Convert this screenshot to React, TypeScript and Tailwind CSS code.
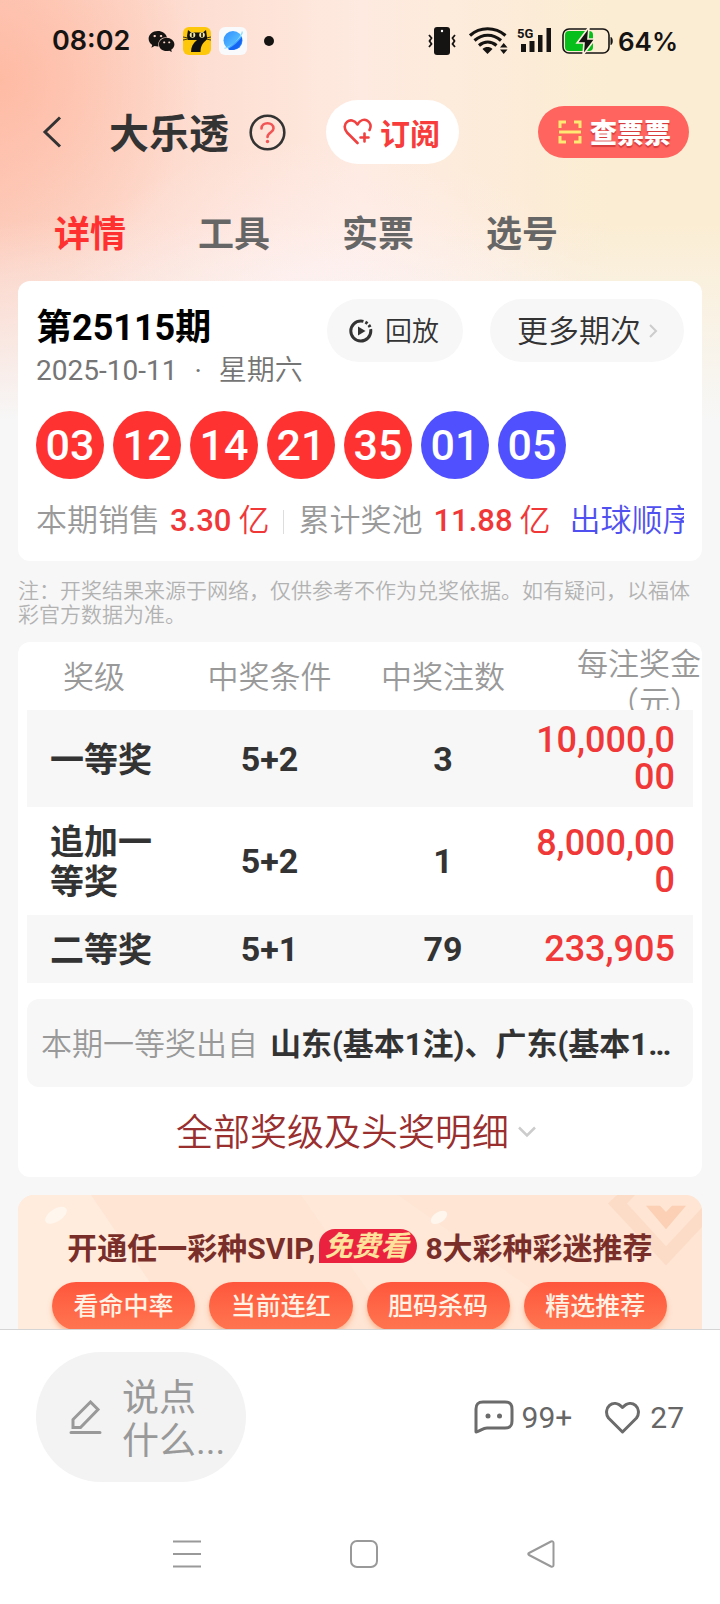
import { useState } from 'react';
import { FaWeixin } from 'react-icons/fa';

const TABS = ['详情', '工具', '实票', '选号'];

const BALLS = [
    { num: '03', color: 'bg-[#ff3232]' },
    { num: '12', color: 'bg-[#ff3232]' },
    { num: '14', color: 'bg-[#ff3232]' },
    { num: '21', color: 'bg-[#ff3232]' },
    { num: '35', color: 'bg-[#ff3232]' },
    { num: '01', color: 'bg-[#5050ff]' },
    { num: '05', color: 'bg-[#5050ff]' },
];

const PRIZES = [
    { level: '一等奖', rule: '5+2', count: '3', amount: '10,000,000' },
    { level: '追加一等奖', rule: '5+2', count: '1', amount: '8,000,000' },
    { level: '二等奖', rule: '5+1', count: '79', amount: '233,905' },
];

const PERKS = ['看命中率', '当前连红', '胆码杀码', '精选推荐'];

function CatIcon() {
    return (
        <svg width="28" height="28" viewBox="0 0 28 28">
            <rect width="28" height="28" rx="6" fill="#fdc70c" />
            <path d="M5 3l3 2.500h12L23 3l1 7c1 3-3 4-5 8-1 2-1.500 4-1.500 7H8c0-5 2-9 6-12H5L4 9z" fill="#111" />
            <circle cx="9.500" cy="8" r="2.800" fill="#f7e9a0" />
            <circle cx="19" cy="8" r="2.800" fill="#f7e9a0" />
            <path d="M9.500 6v4M19 6v4" stroke="#111" strokeWidth="1.6" />
            <path d="M0 10l5 1M0 13l5-1M28 10l-5 1M28 13l-5-1" stroke="#111" strokeWidth="0.8" />
        </svg>
    );
}

function PlanetIcon() {
    return (
        <svg width="28" height="28" viewBox="0 0 28 28">
            <defs>
                <linearGradient id="planet" x1="0" y1="0" x2="1" y2="1">
                    <stop offset="0" stopColor="#2f8bff" />
                    <stop offset="0.55" stopColor="#4fb6ff" />
                    <stop offset="1" stopColor="#0a5cf0" />
                </linearGradient>
            </defs>
            <rect width="28" height="28" rx="6" fill="#f8fafc" />
            <circle cx="14" cy="13.5" r="9.5" fill="url(#planet)" />
            <path d="M23 4c3 2-3 8-8 12-5 4-9 7-10 5 4-1 8-3 11-6s6-7 7-11z" fill="#8bdcff" />
            <path d="M9 22c6-3 10-7 14-12 1 6-4 13-10 13-2 0-3 0-4-1z" fill="#1565f5" />
        </svg>
    );
}

function VibrateIcon() {
    return (
        <svg width="28" height="28" viewBox="0 0 28 28">
            <rect x="6" y="0" width="16" height="28" rx="3" fill="#161413" />
            <circle cx="14" cy="4" r="1.2" fill="#fff" />
            <path
                d="M1 8l2.500 3-2 3 2 3L1 20M27 8l-2.500 3 2 3-2 3L27 20"
                fill="none"
                stroke="#161413"
                strokeWidth="1.800"
            />
        </svg>
    );
}

function WifiIcon() {
    return (
        <svg width="39" height="28" viewBox="0 0 39 28">
            <g fill="none" stroke="#161413" strokeWidth="3.200">
                <path d="M1 8.500C11-.5 26-.5 36.500 8.500" />
                <path d="M5.500 13.500c8-7 18.500-7 26.500 0" />
                <path d="M10 18.500c5.500-4.500 12-4.500 17.500 0" />
            </g>
            <path d="M13.500 22c3-2.600 7-2.600 10 0l-5 5z" fill="#161413" />
            <path d="M31 20.500h7.500L34.700 16zM31 22.500h7.500L34.700 27z" fill="#161413" />
        </svg>
    );
}

function SignalIcon() {
    return (
        <svg width="36" height="28" viewBox="0 0 36 28">
            <text x="0" y="11" fontSize="13" fontWeight="700" fontFamily="Roboto, sans-serif" fill="#161413">5G</text>
            <path d="M4 17h5v8H4zM12.500 14h5v11h-5zM21 8h4.500v17H21zM29.500 1H34v24h-4.500z" fill="#161413" />
        </svg>
    );
}

function BatteryIcon() {
    return (
        <svg width="52" height="28" viewBox="0 0 52 28">
            <rect x="1" y="2" width="46" height="24" rx="6" fill="none" stroke="#161413" strokeWidth="1.600" />
            <rect x="3" y="4" width="28" height="20" rx="4" fill="#06bf1b" />
            <path d="M48.500 10c3 0 3 8 0 8z" fill="#161413" />
            <path d="M27 0L15 16h7l-1 12 12-16h-7z" fill="#161413" stroke="#fdf1dc" strokeWidth="1.600" />
        </svg>
    );
}

function StatusBar() {
    return (
        <div className="flex h-[82px] items-center justify-between pr-[42px] pl-[52px] font-['Inter',sans-serif] font-semibold text-[#161413]">
            <div className="flex items-center">
                <span className="text-[27px]">08:02</span>
                <FaWeixin className="ml-[18px]" size={27} />
                <div className="ml-2 flex items-center gap-2">
                    <CatIcon />
                    <PlanetIcon />
                </div>
                <span className="ml-[17px] size-[10px] rounded-full bg-[#161413]" />
            </div>
            <div className="flex items-center">
                <VibrateIcon />
                <div className="ml-[13px] flex items-center gap-[9px]">
                    <WifiIcon />
                    <SignalIcon />
                    <BatteryIcon />
                </div>
                <span className="ml-1 text-[26px]">64%</span>
            </div>
        </div>
    );
}

function TitleBar() {
    return (
        <header className="flex h-[100px] items-center pr-[31px] pl-[42px]">
            <button aria-label="返回">
                <svg width="20" height="32" viewBox="0 0 20 32" fill="none" stroke="#333" strokeWidth="3">
                    <path d="M18 1.500L3 16l15 14.500" />
                </svg>
            </button>
            <h1 className="ml-[47px] pt-[6px] text-[40px] leading-none font-bold text-[#333]">大乐透</h1>
            <button className="ml-5" aria-label="帮助">
                <svg width="37" height="37" viewBox="0 0 37 37" fill="none" strokeWidth="2.600">
                    <circle cx="18.500" cy="18.500" r="16.800" stroke="#333" />
                    <path d="M12.500 14.500c0-7 12-7 12 0 0 4-6 4-6 8.500" stroke="#f25555" strokeLinecap="round" />
                    <circle cx="18.500" cy="27.500" r="1.700" fill="#f25555" />
                </svg>
            </button>
            <button className="ml-10 flex h-16 items-center gap-2 rounded-full bg-white pr-[19px] pl-[17px] text-[30px] font-bold text-[#f83b3b]">
                <svg width="29" height="28" viewBox="0 0 29 28" fill="none" stroke="#f04040" strokeWidth="2.600" strokeLinecap="round" strokeLinejoin="round">
                    <path d="M14.500 25L4 14.500C-3 6 8-3 14.500 6.500 20-3 31 4 26.500 12" />
                    <path d="M21.500 15.500v8M17.500 19.500h8" />
                </svg>
                <span className="pt-1">订阅</span>
            </button>
            <button className="ml-auto flex h-[52px] items-center gap-2 rounded-full bg-[#ff645f] pr-[18px] pl-5 text-[27px] font-black text-white [text-shadow:0_2px_1px_#d63c3c]">
                <svg width="24" height="24" viewBox="0 0 24 24" fill="none" stroke="#ffe873" strokeWidth="3">
                    <path d="M2 8V2h6M16 2h6v6M22 16v6h-6M8 22H2v-6M1 12h22" />
                </svg>
                <span className="pt-1">查票票</span>
            </button>
        </header>
    );
}

function DrawCard() {
    return (
        <section className="rounded-xl bg-white px-[18px] pt-[18px]">
            <div className="flex items-start">
                <div>
                    <h2 className="pt-[3px] text-[36px] leading-[52px] font-bold text-black">第25115期</h2>
                    <p className="flex gap-[17px] text-[28px] leading-[34px] text-[#757575]">
                        <span>2025-10-11</span>
                        <span>·</span>
                        <span className="font-[350]">星期六</span>
                    </p>
                </div>
                <div className="ml-auto flex gap-[27px] text-[#333]">
                    <button className="flex h-[63px] items-center gap-3 rounded-full bg-[#f7f7f7] pr-6 pl-[22px] text-[27px]">
                        <svg width="24" height="24" viewBox="0 0 24 24" fill="none" stroke="#333" strokeWidth="3">
                            <path d="M12 2a10 10 0 1 0 9.800 10" />
                            <path d="M12 2a10 10 0 0 1 9.800 10" strokeDasharray="2.500 2" />
                            <path d="M9 7.500l7.500 4.500L9 16.500z" fill="#333" stroke="none" />
                        </svg>
                        <span className="pt-1 font-[350]">回放</span>
                    </button>
                    <button className="flex h-[63px] items-center gap-2 rounded-full bg-[#f7f7f7] pr-[26px] pl-[27px] text-[31px]">
                        <span className="pt-1 font-[350]">更多期次</span>
                        <svg width="9" height="14" viewBox="0 0 9 14" fill="none" stroke="#ccc" strokeWidth="2">
                            <path d="M1 1l6 6-6 6" />
                        </svg>
                    </button>
                </div>
            </div>
            <ul className="mt-[23px] flex gap-[9px]">
                {BALLS.map(ball => (
                    <li
                        key={ball.num}
                        className={`flex size-[68px] items-center justify-center rounded-full text-[43px] font-medium text-white ${ball.color}`}
                    >
                        {ball.num}
                    </li>
                ))}
            </ul>
            <div className="flex h-[82px] items-center overflow-hidden pt-[3px] text-[31px] font-[350] whitespace-nowrap text-[#999]">
                本期销售
                <span className="ml-[10px] font-medium text-[#f03838]">3.30</span>
                <span className="ml-[7px] text-[#f03838]">亿</span>
                <span className="mx-[14px] h-6 w-px shrink-0 bg-[#ddd]" />
                累计奖池
                <span className="ml-[11px] font-medium text-[#f03838]">11.88</span>
                <span className="ml-[7px] text-[#f03838]">亿</span>
                <a href="#order" className="ml-[19px] text-[#5050f0]">出球顺序</a>
            </div>
        </section>
    );
}

function PrizeTable() {
    return (
        <table className="w-full table-fixed">
            <colgroup>
                <col className="w-[156px]" />
                <col className="w-[173px]" />
                <col className="w-[174px]" />
                <col />
            </colgroup>
            <thead className="text-[31px] leading-[38px] text-[#999]">
                <tr className="h-[68px]">
                    <th className="pt-1 pl-9 text-left font-[350]">奖级</th>
                    <th className="pt-1 font-[350]">中奖条件</th>
                    <th className="pt-1 font-[350]">中奖注数</th>
                    <th className="p-0 text-right font-[350]">
                        <div className="-mr-2 ml-8 h-[68px] overflow-hidden pt-1">每注奖金（元）</div>
                    </th>
                </tr>
            </thead>
            <tbody className="text-[34px] leading-10 font-bold text-[#333]">
                {PRIZES.map(prize => (
                    <tr key={prize.level} className="odd:bg-[#f7f7f7]">
                        <td className="px-[23px] pt-[15px] pb-[13px]">{prize.level}</td>
                        <td className="text-center">{prize.rule}</td>
                        <td className="text-center">{prize.count}</td>
                        <td className="pt-3 pb-[11px] pr-[18px] text-right text-[36px] leading-[37px] font-medium break-all text-[#f03838]">
                            {prize.amount}
                        </td>
                    </tr>
                ))}
            </tbody>
        </table>
    );
}

function SvipBanner() {
    return (
        <section className="relative overflow-hidden rounded-t-2xl bg-[#fee5d4] px-[34px] pt-[31px]">
            <svg className="absolute inset-0 size-full" viewBox="0 0 684 134" preserveAspectRatio="none">
                <path d="M0 0h73l72 100v34H0z" fill="#ffecdd" />
                <path d="M283 0l100 134h200L380 0z" fill="#ffe8d8" />
                <ellipse cx="38" cy="19" rx="12" ry="6" transform="rotate(-30 38 19)" fill="#fff6ee" />
                <ellipse cx="421" cy="21" rx="9" ry="5" transform="rotate(-30 421 21)" fill="#fff6ee" />
                <path d="M590 8l58 58 36-36V12l-36 36L609 8l8-8h-18z" fill="#fddcc7" />
                <path d="M628 10h14l6 6 6-6h14l-20 22z" fill="#fbd0b4" />
            </svg>
            <h3 className="relative flex h-10 items-center justify-center text-[30px] font-bold whitespace-nowrap text-[#7a2e2a]">
                <span className="pt-1">开通任一彩种SVIP,</span>
                <em className="mr-2 ml-1 rounded-tl-2xl rounded-r-[17px] bg-[#ea2240] pt-[2px] pr-[9px] pl-[5px] text-[28px] leading-8 text-[#ffe39c]">免费看</em>
                <span className="pt-1">8大彩种彩迷推荐</span>
            </h3>
            <div className="relative mt-4 grid h-[56px] grid-cols-4 items-start gap-[14px] pr-px">
                {PERKS.map(perk => (
                    <button
                        key={perk}
                        className="h-12 rounded-full bg-linear-to-b from-[#fe563c] to-[#ff7550] pt-[2px] text-[25px] font-medium whitespace-nowrap text-[#fff3e6] shadow-md shadow-[#fbb48f]"
                    >
                        {perk}
                    </button>
                ))}
            </div>
        </section>
    );
}

function CommentBar() {
    return (
        <div className="flex items-center px-9 pt-[22px] text-[30px] text-[#666]">
            <label className="flex h-[130px] w-[210px] items-center gap-5 rounded-full bg-[#f3f3f3] pl-[33px]">
                <svg className="shrink-0" width="33" height="34" viewBox="0 0 33 34" fill="none" stroke="#999" strokeWidth="3" strokeLinecap="round">
                    <path d="M4 27.500v-8L21.500 2l7.500 7.500L11.500 27.500zM2 32.500h29" />
                </svg>
                <textarea
                    rows={2}
                    aria-label="评论"
                    placeholder="说点什么..."
                    className="box-content w-[106px] resize-none overflow-hidden bg-transparent pt-[6px] text-[37px] leading-[43px] font-normal outline-none placeholder:text-[#999]"
                />
            </label>
            <button className="ml-auto flex items-center gap-2">
                <svg width="40" height="34" viewBox="0 0 40 34" fill="none" stroke="#6b6b6b" strokeWidth="3" strokeLinejoin="round">
                    <path d="M2 32V9c0-5 2-7 7-7h22c5 0 7 2 7 7v12c0 5-2 7-7 7H13c-4 0-7 3-11 4z" />
                    <circle cx="14" cy="16" r="2.500" fill="#6b6b6b" stroke="none" />
                    <circle cx="25.500" cy="16" r="2.500" fill="#6b6b6b" stroke="none" />
                </svg>
                99+
            </button>
            <button className="ml-8 flex items-center gap-[9px]">
                <svg width="37" height="34" viewBox="0 0 37 34" fill="none" stroke="#6b6b6b" strokeWidth="3" strokeLinejoin="round">
                    <path d="M18.500 32L4.500 18C-2 9 9-3 18.500 7.500 28-3 39 9 32.500 18z" />
                </svg>
                27
            </button>
        </div>
    );
}

function SystemNav() {
    return (
        <nav className="grid h-[122px] grid-cols-3 items-center justify-items-center pt-[22px] pr-[90px] pl-[98px]">
            <button aria-label="最近任务">
                <svg width="28" height="28" viewBox="0 0 28 28" stroke="#999" strokeWidth="2.200">
                    <path d="M0 1.500h28M0 14h28M0 26.500h28" />
                </svg>
            </button>
            <button aria-label="主页">
                <svg width="28" height="28" viewBox="0 0 28 28" fill="none" stroke="#999" strokeWidth="2">
                    <rect x="1" y="1" width="26" height="26" rx="6" />
                </svg>
            </button>
            <button aria-label="后退">
                <svg width="28" height="28" viewBox="0 0 28 28" fill="none" stroke="#999" strokeWidth="2" strokeLinejoin="round">
                    <path d="M2 13L24 1.500c1.500-.5 2.500 0 2.500 1.500v22c0 1.500-1 2-2.500 1.500L2 15c-1-.5-1-1.500 0-2z" />
                </svg>
            </button>
        </nav>
    );
}

export default function App() {
    const [tab, setTab] = useState(TABS[0]);

    return (
        <div className="flex h-screen flex-col bg-[#f7f7f7] font-['Roboto','Noto_Sans_CJK_SC',sans-serif]">
            <main className="min-h-0 flex-1 overflow-y-auto bg-[linear-gradient(to_bottom,rgba(247,247,247,0)_220px,#f7f7f7_420px),radial-gradient(ellipse_260px_160px_at_45%_300px,rgba(255,240,240,0.9),rgba(255,240,240,0)),radial-gradient(ellipse_200px_200px_at_0_80px,rgba(255,178,152,0.7),rgba(255,200,180,0)),linear-gradient(to_right,#fdcfc0,#feeae0_50%,#fbedd3_85%)] [scrollbar-width:none]">
                <StatusBar />
                <TitleBar />
                <div className="flex h-[99px] items-center gap-[72px] pt-[6px] pl-[54px] text-[36px] font-bold">
                    {TABS.map(name => (
                        <button
                            key={name}
                            onClick={() => setTab(name)}
                            className={tab === name ? 'text-[#ff3030]' : 'text-[#666]'}
                        >
                            {name}
                        </button>
                    ))}
                </div>
                <div className="px-[18px]">
                    <DrawCard />
                    <p className="mt-[18px] mb-[15px] text-[21px] leading-6 font-[350] text-[#b2b2b2]">
                        注：开奖结果来源于网络，仅供参考不作为兑奖依据。如有疑问，以福体彩官方数据为准。
                    </p>
                    <section className="mb-[18px] overflow-hidden rounded-xl bg-white px-[9px]">
                        <PrizeTable />
                        <div className="mt-4 flex h-[88px] items-center gap-3 rounded-xl bg-[#f7f7f7] px-[14px] pt-1 text-[31px]">
                            <span className="shrink-0 font-[350] text-[#999]">本期一等奖出自</span>
                            <span className="truncate font-bold text-[#333]">山东(基本1注)、广东(基本1注)</span>
                        </div>
                        <button className="flex h-[90px] w-full items-center justify-center gap-[9px] pr-2 text-[37px] font-[350] text-[#992f2f]">
                            <span className="pt-1">全部奖级及头奖明细</span>
                            <svg width="18" height="12" viewBox="0 0 18 12" fill="none" stroke="#ccc" strokeWidth="2.500">
                                <path d="M1 1.500l8 8 8-8" />
                            </svg>
                        </button>
                    </section>
                    <SvipBanner />
                </div>
            </main>
            <footer className="border-t border-[#d5d5d5] bg-white">
                <CommentBar />
                <SystemNav />
            </footer>
        </div>
    );
}
